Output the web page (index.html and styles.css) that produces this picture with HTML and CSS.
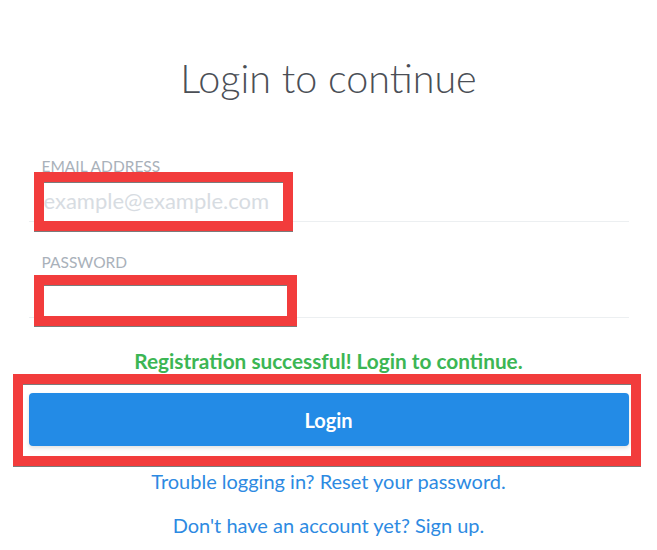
FILE: index.html
```html
<!DOCTYPE html>
<html lang="en">
<head>
<meta charset="utf-8">
<title>Login to continue</title>
<link rel="stylesheet" href="styles.css">
</head>
<body>
<main class="page">
  <h1 class="title">Login to continue</h1>
  <form class="form">
    <div class="field">
      <label class="label" for="email">EMAIL ADDRESS</label>
      <input class="input" id="email" type="email" placeholder="example@example.com">
      <span class="mark mark-email"></span>
    </div>
    <div class="field">
      <label class="label" for="password">PASSWORD</label>
      <input class="input" id="password" type="password">
      <span class="mark mark-password"></span>
    </div>
    <p class="success">Registration successful! Login to continue.</p>
    <div class="action">
      <button class="btn" type="button">Login</button>
      <span class="mark mark-button"></span>
    </div>
  </form>
  <p class="link-row"><a class="link" href="#">Trouble logging in? Reset your password.</a></p>
  <p class="link-row"><a class="link" href="#">Don't have an account yet? Sign up.</a></p>
</main>
</body>
</html>
```

FILE: styles.css
```css
* { box-sizing: border-box; }
html, body { margin: 0; padding: 0; background: #fff; }
body {
  font-family: "Lato", "Open Sans", "Liberation Sans", sans-serif;
  color: #4b4f56;
}
.page {
  width: 600px;
  margin: 0 auto;
  padding-top: 50px;
}
.title {
  margin: 0;
  font-size: 39.5px;
  line-height: 56px;
  font-weight: 300;
  text-align: center;
  color: #4b4f56;
}
.form { margin-top: 52px; }
.field {
  position: relative;
  border-bottom: 1px solid #eceff1;
  margin-bottom: 32px;
}
.label {
  display: block;
  font-size: 15.5px;
  line-height: 16px;
  color: #a9b1ba;
  padding-left: 13px;
  margin-bottom: 9px;
}
.input {
  display: block;
  width: 100%;
  height: 38px;
  border: 0;
  outline: 0;
  padding: 0 0 4px 15px;
  font-family: inherit;
  font-size: 22px;
  color: #4b4f56;
  background: transparent;
}
.input::placeholder { color: #d7dce2; }
.mark {
  position: absolute;
  border: 10px solid #f23c3c;
  box-shadow: 0 1px 0 #7b7b7b, inset 0 1px 0 #7b7b7b;
  pointer-events: none;
}
.mark-email { left: 5px; top: 14px; width: 259px; height: 59px; }
.mark-password { left: 5px; top: 21px; width: 263px; height: 51px; }
.success {
  margin: 0;
  text-align: center;
  font-size: 20.8px;
  line-height: 22px;
  font-weight: 700;
  color: #3cb654;
}
.action {
  position: relative;
  margin-top: 21px;
}
.btn {
  display: block;
  width: 100%;
  height: 53px;
  border: 0;
  border-radius: 4px;
  background: #238be6;
  color: #fff;
  font-family: inherit;
  font-size: 20px;
  font-weight: 700;
  box-shadow: 0 2px 4px rgba(0, 0, 0, 0.12);
}
.mark-button { left: -16px; top: -19px; width: 628px; height: 92px; }
.link-row {
  margin: 24px 0 0;
  text-align: center;
  font-size: 20px;
  line-height: 22px;
}
.link-row + .link-row { margin-top: 22px; }
.link { color: #2d8ae2; text-decoration: none; }
```
